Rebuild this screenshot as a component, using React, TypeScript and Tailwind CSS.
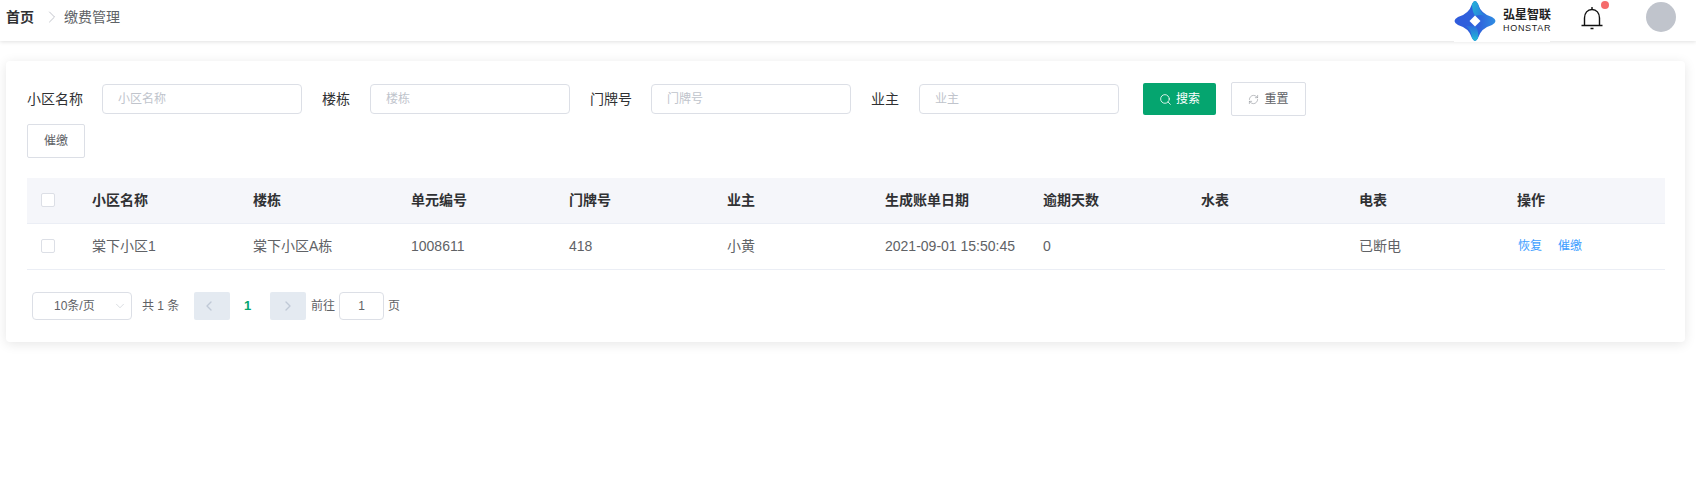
import React from "react";
import { ChevronDown, ChevronLeft, ChevronRight, RefreshCw, Search } from "lucide-react";

const fields = [
  { label: "小区名称", labelWidth: "w-[56px]", gap: "mr-[19px]" },
  { label: "楼栋", labelWidth: "w-[28px]", gap: "mr-[20px]" },
  { label: "门牌号", labelWidth: "w-[42px]", gap: "mr-[19px]" },
  { label: "业主", labelWidth: "w-[28px]", gap: "mr-[20px]" },
];

const headers = ["小区名称", "楼栋", "单元编号", "门牌号", "业主", "生成账单日期", "逾期天数", "水表", "电表", "操作"];
const row = ["棠下小区1", "棠下小区A栋", "1008611", "418", "小黄", "2021-09-01 15:50:45", "0", "", "已断电"];

function Logo() {
  return (
    <div className="flex h-[42px] w-[96px] items-start bg-white">
      <svg width="42" height="40" viewBox="0 0 42 40" className="mt-[1px] shrink-0">
        <defs>
          <linearGradient id="hz" x1="0" y1="0" x2="1" y2="0">
            <stop offset="0" stopColor="#2f5bdc" />
            <stop offset="0.6" stopColor="#2f63dc" />
            <stop offset="1" stopColor="#2f8ee2" />
          </linearGradient>
          <linearGradient id="top" x1="0" y1="0" x2="1" y2="0.6">
            <stop offset="0" stopColor="#25b4d8" />
            <stop offset="1" stopColor="#2a7fdc" />
          </linearGradient>
          <linearGradient id="bottom" x1="0" y1="1" x2="0" y2="0">
            <stop offset="0" stopColor="#22bcd6" />
            <stop offset="1" stopColor="#2b6edc" />
          </linearGradient>
        </defs>
        <path d="M18 3Q21-3 24 3Q27 13 38 16Q45 20 38 24Q27 27 24 37Q21 43 18 37Q15 27 4 24Q-3 20 4 16Q15 13 18 3Z" fill="url(#hz)" />
        <path d="M18 3Q21-3 24 3Q26 12 32 15Q26 13 21 15Q18 10 18 3Z" fill="url(#top)" />
        <path d="M18 37Q21 43 24 37Q25 29 21 25Q17 25 12 25Q17 28 18 37Z" fill="url(#bottom)" />
        <path d="M21 14.500L26.500 20L21 25.500L15.500 20Z" fill="#fff" />
      </svg>
      <div className="ml-[7px] flex flex-col">
        <span className="mt-[9px] text-[12px] leading-[13px] font-bold whitespace-nowrap text-[#222]">弘星智联</span>
        <span className="mt-[1px] text-[9px] leading-[11px] tracking-[0.7px] text-[#222]">HONSTAR</span>
      </div>
    </div>
  );
}

function Bell() {
  return (
    <div className="relative h-[24px] w-[22px]">
      <svg width="22" height="24" viewBox="0 0 22 24" fill="none" stroke="#111" strokeWidth="1.400">
        <path d="M3.500 19V12C3.500 7 6.500 3.500 11 3.500S18.500 7 18.500 12V19" />
        <path d="M0.500 19.500H21.500" strokeWidth="1.500" />
        <path d="M11 1V3.500" />
        <path d="M9.500 22.500H12.500" strokeWidth="1.500" />
      </svg>
      <span className="absolute top-[-5px] right-[-6px] h-[8px] w-[8px] rounded-full bg-[#f56c6c]" />
    </div>
  );
}

function Checkbox() {
  return <span className="block h-[14px] w-[14px] rounded-[2px] border border-[#dcdfe6] bg-white" />;
}

export default function App() {
  return (
    <div className="min-h-[481px] bg-white font-['Liberation_Sans','Noto_Sans_CJK_SC',sans-serif] text-[14px] text-[#606266]">
      <header className="relative flex h-[41px] items-start bg-white pl-[6px] shadow-[0_1px_4px_rgba(0,0,0,0.12)]">
        <div className="flex h-[34px] items-center">
          <span className="font-bold text-[#303133]">首页</span>
          <ChevronRight size={20} strokeWidth={1} className="mr-[2px] ml-[8px] text-[#b4b8c0]" />
          <span className="text-[#606266]">缴费管理</span>
        </div>
        <div className="ml-auto flex items-start pr-[20px]">
          <Logo />
          <div className="mt-[6px] ml-[31px]">
            <Bell />
          </div>
          <span className="mt-[2px] ml-[43px] block h-[30px] w-[30px] rounded-full bg-[#c0c4cc]" />
        </div>
      </header>

      <main className="pt-[20px] pr-[11px] pl-[6px]">
        <section className="rounded-[4px] bg-white pt-[21px] pr-[20px] pb-[22px] pl-[21px] shadow-[0_2px_12px_rgba(0,0,0,0.1)]">
          <div className="flex h-[34px] items-center">
            {fields.map((field) => (
              <div key={field.label} className="mr-[20px] flex items-center">
                <label className={`${field.labelWidth} ${field.gap} whitespace-nowrap text-[#303133]`}>{field.label}</label>
                <input
                  placeholder={field.label}
                  className="h-[30px] w-[200px] rounded-[4px] border border-[#dcdfe6] px-[15px] text-[12px] outline-none placeholder:text-[#c0c4cc]"
                />
              </div>
            ))}
            <button className="ml-[4px] flex h-[32px] w-[73px] items-center justify-center gap-[4px] rounded-[2px] bg-[#05a56f] text-[12px] text-white">
              <Search size={13} strokeWidth={1.500} />
              搜索
            </button>
            <button className="ml-[15px] flex h-[34px] w-[75px] items-center justify-center gap-[5px] rounded-[2px] border border-[#dcdfe6] bg-white text-[12px]">
              <RefreshCw size={11} strokeWidth={1.300} className="text-[#909399]" />
              重置
            </button>
          </div>

          <button className="mt-[8px] block h-[34px] w-[58px] rounded-[2px] border border-[#dcdfe6] bg-white text-[12px]">催缴</button>

          <table className="mt-[20px] w-full table-fixed border-collapse">
            <colgroup>
              <col className="w-[65px]" />
              <col className="w-[161px]" />
              <col className="w-[158px]" />
              <col className="w-[158px]" />
              <col className="w-[158px]" />
              <col className="w-[158px]" />
              <col className="w-[158px]" />
              <col className="w-[158px]" />
              <col className="w-[158px]" />
              <col className="w-[158px]" />
              <col />
            </colgroup>
            <thead>
              <tr className="h-[45px] border-b border-[#ebeef5] bg-[#f5f6fa]">
                <th className="pl-[14px]">
                  <Checkbox />
                </th>
                {headers.map((title) => (
                  <th key={title} className="text-left font-bold text-[#303133]">
                    {title}
                  </th>
                ))}
              </tr>
            </thead>
            <tbody>
              <tr className="h-[46px] border-b border-[#ebeef5]">
                <td className="pl-[14px]">
                  <Checkbox />
                </td>
                {row.map((cell, index) => (
                  <td key={index} className="whitespace-nowrap">
                    {cell}
                  </td>
                ))}
                <td className="text-[12px] text-[#409eff]">
                  <span className="ml-px">恢复</span>
                  <span className="ml-[16px]">催缴</span>
                </td>
              </tr>
            </tbody>
          </table>

          <div className="mt-[22px] flex h-[28px] items-center pl-[5px] text-[12px]">
            <div className="flex h-[28px] w-[100px] items-center justify-between rounded-[4px] border border-[#dcdfe6] pr-[4px] pl-[21px]">
              <span>10条/页</span>
              <ChevronDown size={14} strokeWidth={1} className="text-[#c0c4cc]" />
            </div>
            <span className="ml-[10px] w-[38px] whitespace-nowrap">共 1 条</span>
            <button className="ml-[14px] flex h-[28px] w-[36px] items-center justify-center rounded-[2px] bg-[#e4eaf1] text-[#c0c9d6]">
              <ChevronLeft size={16} className="mr-[6px]" />
            </button>
            <span className="w-[40px] pr-[5px] text-center text-[13px] font-bold text-[#05a56f]">1</span>
            <button className="flex h-[28px] w-[36px] items-center justify-center rounded-[2px] bg-[#e4eaf1] text-[#c0c9d6]">
              <ChevronRight size={16} />
            </button>
            <span className="ml-[5px]">前往</span>
            <input
              defaultValue="1"
              className="ml-[4px] h-[28px] w-[45px] rounded-[4px] border border-[#dcdfe6] text-center text-[12px] outline-none"
            />
            <span className="ml-[4px]">页</span>
          </div>
        </section>
      </main>
    </div>
  );
}
